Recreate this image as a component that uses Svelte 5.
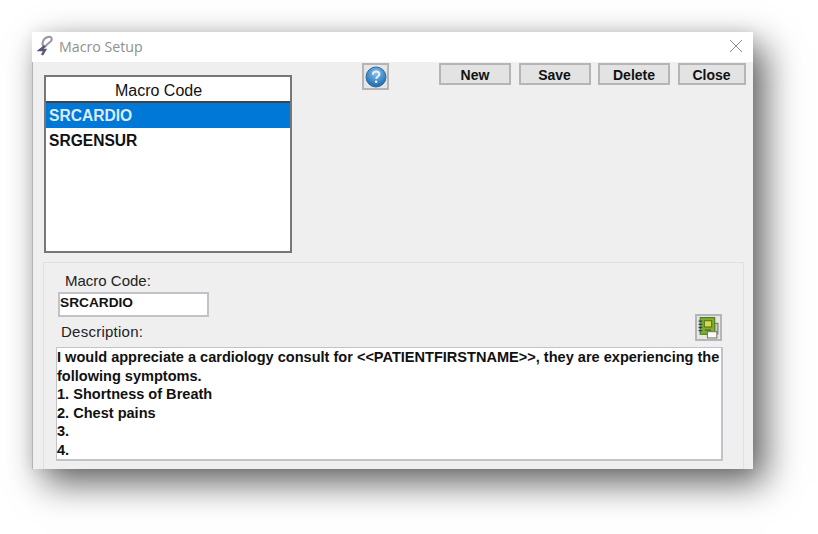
<script>
  const codes = ['SRCARDIO', 'SRGENSUR'];
  const actions = ['New', 'Save', 'Delete', 'Close'];
  let selected = $state('SRCARDIO');
  const lines = [
    'I would appreciate a cardiology consult for <<PATIENTFIRSTNAME>>, they are experiencing the following symptoms.',
    '1. Shortness of Breath',
    '2. Chest pains',
    '3.',
    '4.'
  ];
</script>

<div class="page">
  <div class="window">
    <header class="titlebar">
      <svg class="app-icon" width="18" height="22" viewBox="0 0 18 22">
        <path d="M7 12 C4 9 6 3 11 2 C15 1 16 5 13 7 C11 8.5 9 10 8 12" fill="none" stroke="#9a95a6" stroke-width="2" />
        <path d="M8 11 L3 15 L8 15 L5 20" fill="none" stroke="#5b5378" stroke-width="2.4" />
      </svg>
      <span class="title">Macro Setup</span>
      <svg class="close-x" width="14" height="14" viewBox="0 0 14 14">
        <path d="M1 1 L13 13 M13 1 L1 13" stroke="#8c8c8c" stroke-width="1" />
      </svg>
    </header>

    <div class="body">
      <section class="top">
        <div class="list">
          <div class="list-head">Macro Code</div>
          {#each codes as code}
            <button class="row" class:active={selected === code} onclick={() => (selected = code)}>{code}</button>
          {/each}
        </div>

        <button class="icon-btn help" aria-label="Help">
          <svg width="22" height="22" viewBox="0 0 22 22">
            <defs>
              <radialGradient id="helpfill" cx="50%" cy="30%" r="75%">
                <stop offset="0" stop-color="#8dc0e8" />
                <stop offset="0.6" stop-color="#3f88c6" />
                <stop offset="1" stop-color="#1c5f9f" />
              </radialGradient>
            </defs>
            <circle cx="11" cy="11" r="10" fill="url(#helpfill)" stroke="#2a6ca8" />
            <path d="M7.8 8.6 C8 6.4 9.5 5.6 11.2 5.6 C13.2 5.6 14.4 6.8 14.4 8.3 C14.4 10.4 11.4 10.5 11.2 12.8" fill="none" stroke="#e8f2fa" stroke-width="2" />
            <circle cx="11.1" cy="15.8" r="1.3" fill="#e8f2fa" />
          </svg>
        </button>

        <div class="actions">
          {#each actions as action}
            <button class="action">{action}</button>
          {/each}
        </div>
      </section>

      <section class="panel">
        <div class="field-label code-label">Macro Code:</div>
        <div class="code-input">{selected}</div>
        <div class="desc-row">
          <div class="field-label desc-label">Description:</div>
          <button class="icon-btn book" aria-label="Macro fields">
            <svg width="23" height="23" viewBox="0 0 22 22">
              <rect x="14" y="7" width="6" height="10" fill="#c9c9c0" stroke="#77776c" />
              <rect x="3" y="1.5" width="14" height="16" fill="#7fae2e" stroke="#4d7420" />
              <path d="M1.5 5 H5 M1.5 8 H5 M1.5 11 H5 M1.5 14 H5" stroke="#27405c" stroke-width="1.2" />
              <rect x="7" y="4.5" width="7" height="6" fill="#d8d84a" stroke="#4d7420" />
              <path d="M7.5 13.5 H13.5" stroke="#3f5f1c" />
              <rect x="10" y="15" width="9" height="6" fill="#fbfbf4" stroke="#77776c" />
            </svg>
          </button>
        </div>
        <div class="desc">
          {#each lines as line}
            <div>{line}</div>
          {/each}
        </div>
      </section>
    </div>
  </div>
</div>

<style>
  :global(body) {
    margin: 0;
    background: #fff;
    font-family: 'Liberation Sans', Arial, sans-serif;
  }

  .page {
    width: 818px;
    height: 534px;
    padding: 32px 0 0 32px;
    box-sizing: border-box;
    overflow: hidden;
  }

  .window {
    width: 721px;
    height: 437px;
    display: flex;
    flex-direction: column;
    background: #efefef;
    box-shadow: 12px 14px 34px rgba(0, 0, 0, 0.62), 0 0 14px rgba(0, 0, 0, 0.08);
    overflow: hidden;
  }

  .titlebar {
    height: 30px;
    flex: none;
    box-sizing: border-box;
    display: flex;
    align-items: center;
    background: #fff;
    padding: 0 10px 2px 5px;
  }

  .app-icon {
    margin-right: 4px;
  }

  .title {
    font-family: 'Open Sans', 'Liberation Sans', sans-serif;
    font-size: 14.2px;
    color: #8f8f8f;
  }

  .close-x {
    margin-left: auto;
  }

  .body {
    flex: 1;
    display: flex;
    flex-direction: column;
    padding: 0 10px 0 11px;
    border-left: 1px solid #b4b4b4;
  }

  .top {
    height: 200px;
    flex: none;
    display: flex;
    align-items: flex-start;
  }

  .list {
    width: 248px;
    height: 178px;
    flex: none;
    margin-top: 13px;
    box-sizing: border-box;
    background: #fff;
    border: 2px solid #777;
    display: flex;
    flex-direction: column;
  }

  .list-head {
    height: 26px;
    flex: none;
    box-sizing: border-box;
    border-bottom: 2px solid #444;
    padding-right: 19px;
    text-align: center;
    font-size: 16px;
    line-height: 27px;
    color: #111;
  }

  .row {
    height: 25px;
    flex: none;
    border: 0;
    padding: 0 0 0 3px;
    background: #fff;
    text-align: left;
    font: bold 15.6px 'Liberation Sans', Arial, sans-serif;
    color: #111;
  }

  .row.active {
    background: #0078d7;
    color: #dcebf8;
  }

  .icon-btn {
    width: 27px;
    height: 27px;
    flex: none;
    padding: 0;
    box-sizing: border-box;
    background: #e6e6e6;
    border: 2px solid #b5b5b5;
    display: flex;
    align-items: center;
    justify-content: center;
  }

  .help {
    margin: 1px 0 0 70px;
  }

  .actions {
    display: flex;
    gap: 7.5px;
    margin: 1px 0 0 50px;
  }

  .action {
    width: 72px;
    height: 22px;
    padding: 2px 0 0;
    box-sizing: border-box;
    background: #e3e3e3;
    border: 2px solid #b5b5b5;
    font: bold 14px 'Liberation Sans', Arial, sans-serif;
    color: #111;
  }

  .action:last-child {
    width: 68px;
  }

  .panel {
    flex: 1;
    width: 701px;
    box-sizing: border-box;
    margin-left: -1px;
    border: 1px solid #e0e0e0;
    border-bottom: 0;
    padding: 10px 20px 0 13px;
  }

  .field-label {
    font-size: 15px;
    color: #222;
    line-height: 16px;
  }

  .code-label {
    margin-left: 8px;
  }

  .code-input {
    width: 151px;
    height: 25px;
    margin: 3px 0 0 1px;
    box-sizing: border-box;
    background: #fff;
    border: 2px solid #c2c2c9;
    padding-left: 0;
    font: bold 13.7px/17px 'Liberation Sans', Arial, sans-serif;
    color: #111;
  }

  .desc-row {
    height: 24px;
    display: flex;
    align-items: flex-end;
    justify-content: space-between;
    padding-left: 4px;
    margin-bottom: 6px;
  }

  .desc-label {
    letter-spacing: 0.25px;
    margin-bottom: 1px;
  }

  .book {
    margin-right: 1px;
  }

  .desc {
    width: 667px;
    height: 114px;
    margin-left: -1px;
    box-sizing: border-box;
    background: #fff;
    border: solid #c2c2c9;
    border-width: 1px 2px 2px 1px;
    padding: 0;
    font: bold 14.55px/18.6px 'Liberation Sans', Arial, sans-serif;
    color: #111;
  }
</style>
